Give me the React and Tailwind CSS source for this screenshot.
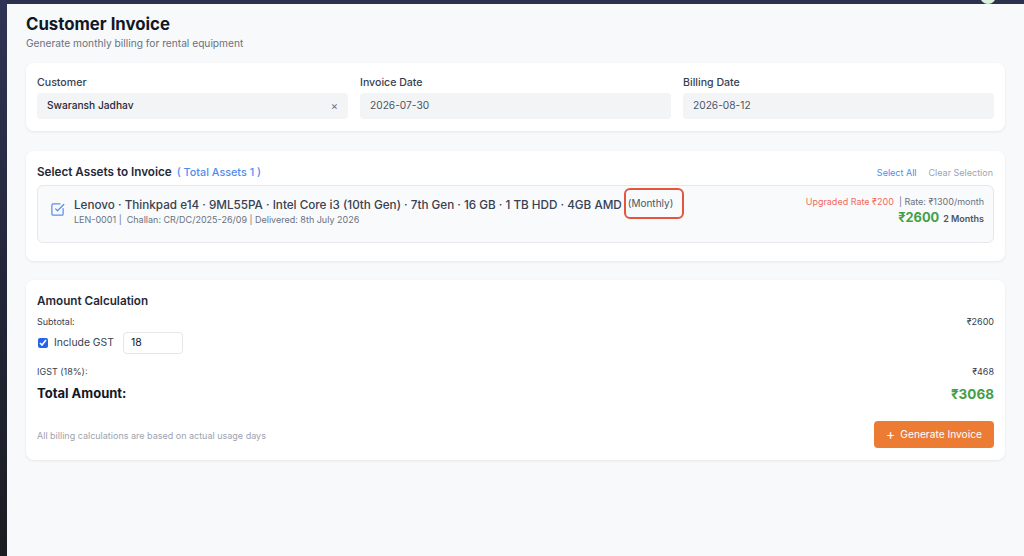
import React from "react";

function CheckIcon() {
  return (
    <svg width="15" height="15" viewBox="0 0 24 24" fill="none" stroke="#5b8def" strokeWidth="2" strokeLinecap="round" strokeLinejoin="round">
      <path d="M21 10.5V19a2 2 0 0 1-2 2H5a2 2 0 0 1-2-2V5a2 2 0 0 1 2-2h11" />
      <path d="m9 11 3 3L22 4" />
    </svg>
  );
}

function Field({ label, value, clear, dark }) {
  return (
    <div className="flex flex-col gap-[3px]">
      <div className="text-[10.6px] leading-[14px] font-medium text-[#374151]">{label}</div>
      <div className="h-[26px] rounded-[4px] bg-[#f3f4f6] flex items-center justify-between px-[10px]">
        <span className={"text-[10.2px] " + (dark ? "text-[#1f2937] font-medium" : "text-[#4b5563]")}>{value}</span>
        {clear && <span className="text-[11px] text-[#6b7280] leading-none">×</span>}
      </div>
    </div>
  );
}

export default function App() {
  return (
    <div className="relative w-[1024px] h-[556px] overflow-hidden bg-[#2c3150] flex" style={{ fontFamily: "Inter, 'Noto Sans', sans-serif" }}>
      <div className="w-[7px] h-full bg-gradient-to-b from-[#2e3455] via-[#23263a] to-[#1c1d22]" />
      <div className="absolute left-[980px] top-[-12px] w-[16px] h-[16px] rounded-full bg-[#d8f0dc]" />
      <div className="flex-1 mt-[4px] bg-[#f8f9fa] pl-[19px] pr-[19px] pt-[9px] flex flex-col">
        <h1 className="text-[16.8px] leading-[22px] font-bold text-[#111827]">Customer Invoice</h1>
        <p className="text-[10.2px] leading-[14px] text-[#6b7280] mt-[1px]">Generate monthly billing for rental equipment</p>

        <div className="mt-[13px] bg-white rounded-[8px] shadow-[0_1px_3px_rgba(0,0,0,0.08)] px-[11px] pt-[13px] pb-[12px] grid grid-cols-3 gap-[12px]">
          <Field label="Customer" value="Swaransh Jadhav" clear dark />
          <Field label="Invoice Date" value="2026-07-30" />
          <Field label="Billing Date" value="2026-08-12" />
        </div>

        <div className="mt-[20px] bg-white rounded-[8px] shadow-[0_1px_3px_rgba(0,0,0,0.08)] px-[11px] pt-[14px] pb-[18px]">
          <div className="flex items-center justify-between h-[16px]">
            <div className="flex items-center gap-[5px]">
              <span className="text-[11.7px] font-semibold text-[#1f2937]">Select Assets to Invoice</span>
              <span className="text-[10.8px] font-medium text-[#4f8cf0]">( Total Assets 1 )</span>
            </div>
            <div className="flex items-center gap-[12px] text-[9px] pr-[1px]">
              <span className="text-[#4f8cf0]">Select All</span>
              <span className="text-[#9ca3af]">Clear Selection</span>
            </div>
          </div>
          <div className="mt-[4px] h-[58px] rounded-[6px] border border-[#e5e7eb] bg-[#f9fafb] flex items-start pl-[12px] pr-[9px] pt-[10px]">
            <div className="mt-[6px]"><CheckIcon /></div>
            <div className="ml-[9px] flex-1 flex flex-col mt-[2px]">
              <div className="flex items-center h-[16px]">
                <span className="text-[11.7px] font-medium text-[#374151]">Lenovo · Thinkpad e14 · 9ML55PA · Intel Core i3 (10th Gen) · 7th Gen · 16 GB · 1 TB HDD · 4GB AMD</span>
                <span className="ml-[2px] text-[10px] text-[#4b5563] border-2 border-[#e2553f] rounded-[6px] h-[31px] pl-[2px] flex items-center w-[60px] -mt-[5px]">(Monthly)</span>
              </div>
              <div className="text-[9px] leading-[12px] text-[#6b7280]">LEN-0001 |&nbsp; Challan: CR/DC/2025-26/09 | Delivered: 8th July 2026</div>
            </div>
            <div className="flex flex-col items-end">
              <div className="text-[9px] leading-[12px]">
                <span className="text-[#f06b5f]">Upgraded Rate ₹200</span>
                <span className="text-[#6b7280]"> &nbsp;| Rate: ₹1300/month</span>
              </div>
              <div className="flex items-baseline gap-[4px] h-[18px] mt-[1px]">
                <span className="text-[12.8px] leading-[18px] font-bold text-[#43a047]">₹2600</span>
                <span className="text-[9px] font-semibold text-[#4b5563]">2 Months</span>
              </div>
            </div>
          </div>
        </div>

        <div className="mt-[19px] bg-white rounded-[8px] shadow-[0_1px_3px_rgba(0,0,0,0.08)] px-[11px] pt-[13px] pb-[12px]">
          <div className="text-[11.7px] leading-[16px] font-semibold text-[#1f2937]">Amount Calculation</div>
          <div className="mt-[7px] flex justify-between text-[9px] leading-[12px] text-[#374151]">
            <span>Subtotal:</span>
            <span>₹2600</span>
          </div>
          <div className="mt-[4px] flex items-center h-[21px]">
            <input type="checkbox" defaultChecked className="w-[10px] h-[10px] m-0 ml-[1px] accent-[#2563eb]" />
            <span className="ml-[6px] text-[10.4px] text-[#374151]">Include GST</span>
            <div className="ml-[9px] w-[60px] h-[22px] rounded-[4px] border border-[#e5e7eb] bg-white flex items-center px-[7px] text-[10.5px] text-[#111827]">18</div>
          </div>
          <div className="mt-[13px] flex justify-between text-[9px] leading-[12px] text-[#374151]">
            <span>IGST (18%):</span>
            <span>₹468</span>
          </div>
          <div className="mt-[5px] flex justify-between items-center h-[22px]">
            <span className="text-[13px] font-bold text-[#111827]">Total Amount:</span>
            <span className="text-[13.5px] font-bold text-[#43a047]">₹3068</span>
          </div>
          <div className="mt-[16px] flex justify-between items-center">
            <span className="text-[9px] text-[#9ca3af] mt-[2px]">All billing calculations are based on actual usage days</span>
            <button className="h-[27px] w-[120px] rounded-[4px] bg-[#ec7b34] text-white text-[10.2px] flex items-center justify-center gap-[5px]">
              <span className="text-[14px] leading-none -mt-[1px]">+</span>
              <span>Generate Invoice</span>
            </button>
          </div>
        </div>
      </div>
    </div>
  );
}
